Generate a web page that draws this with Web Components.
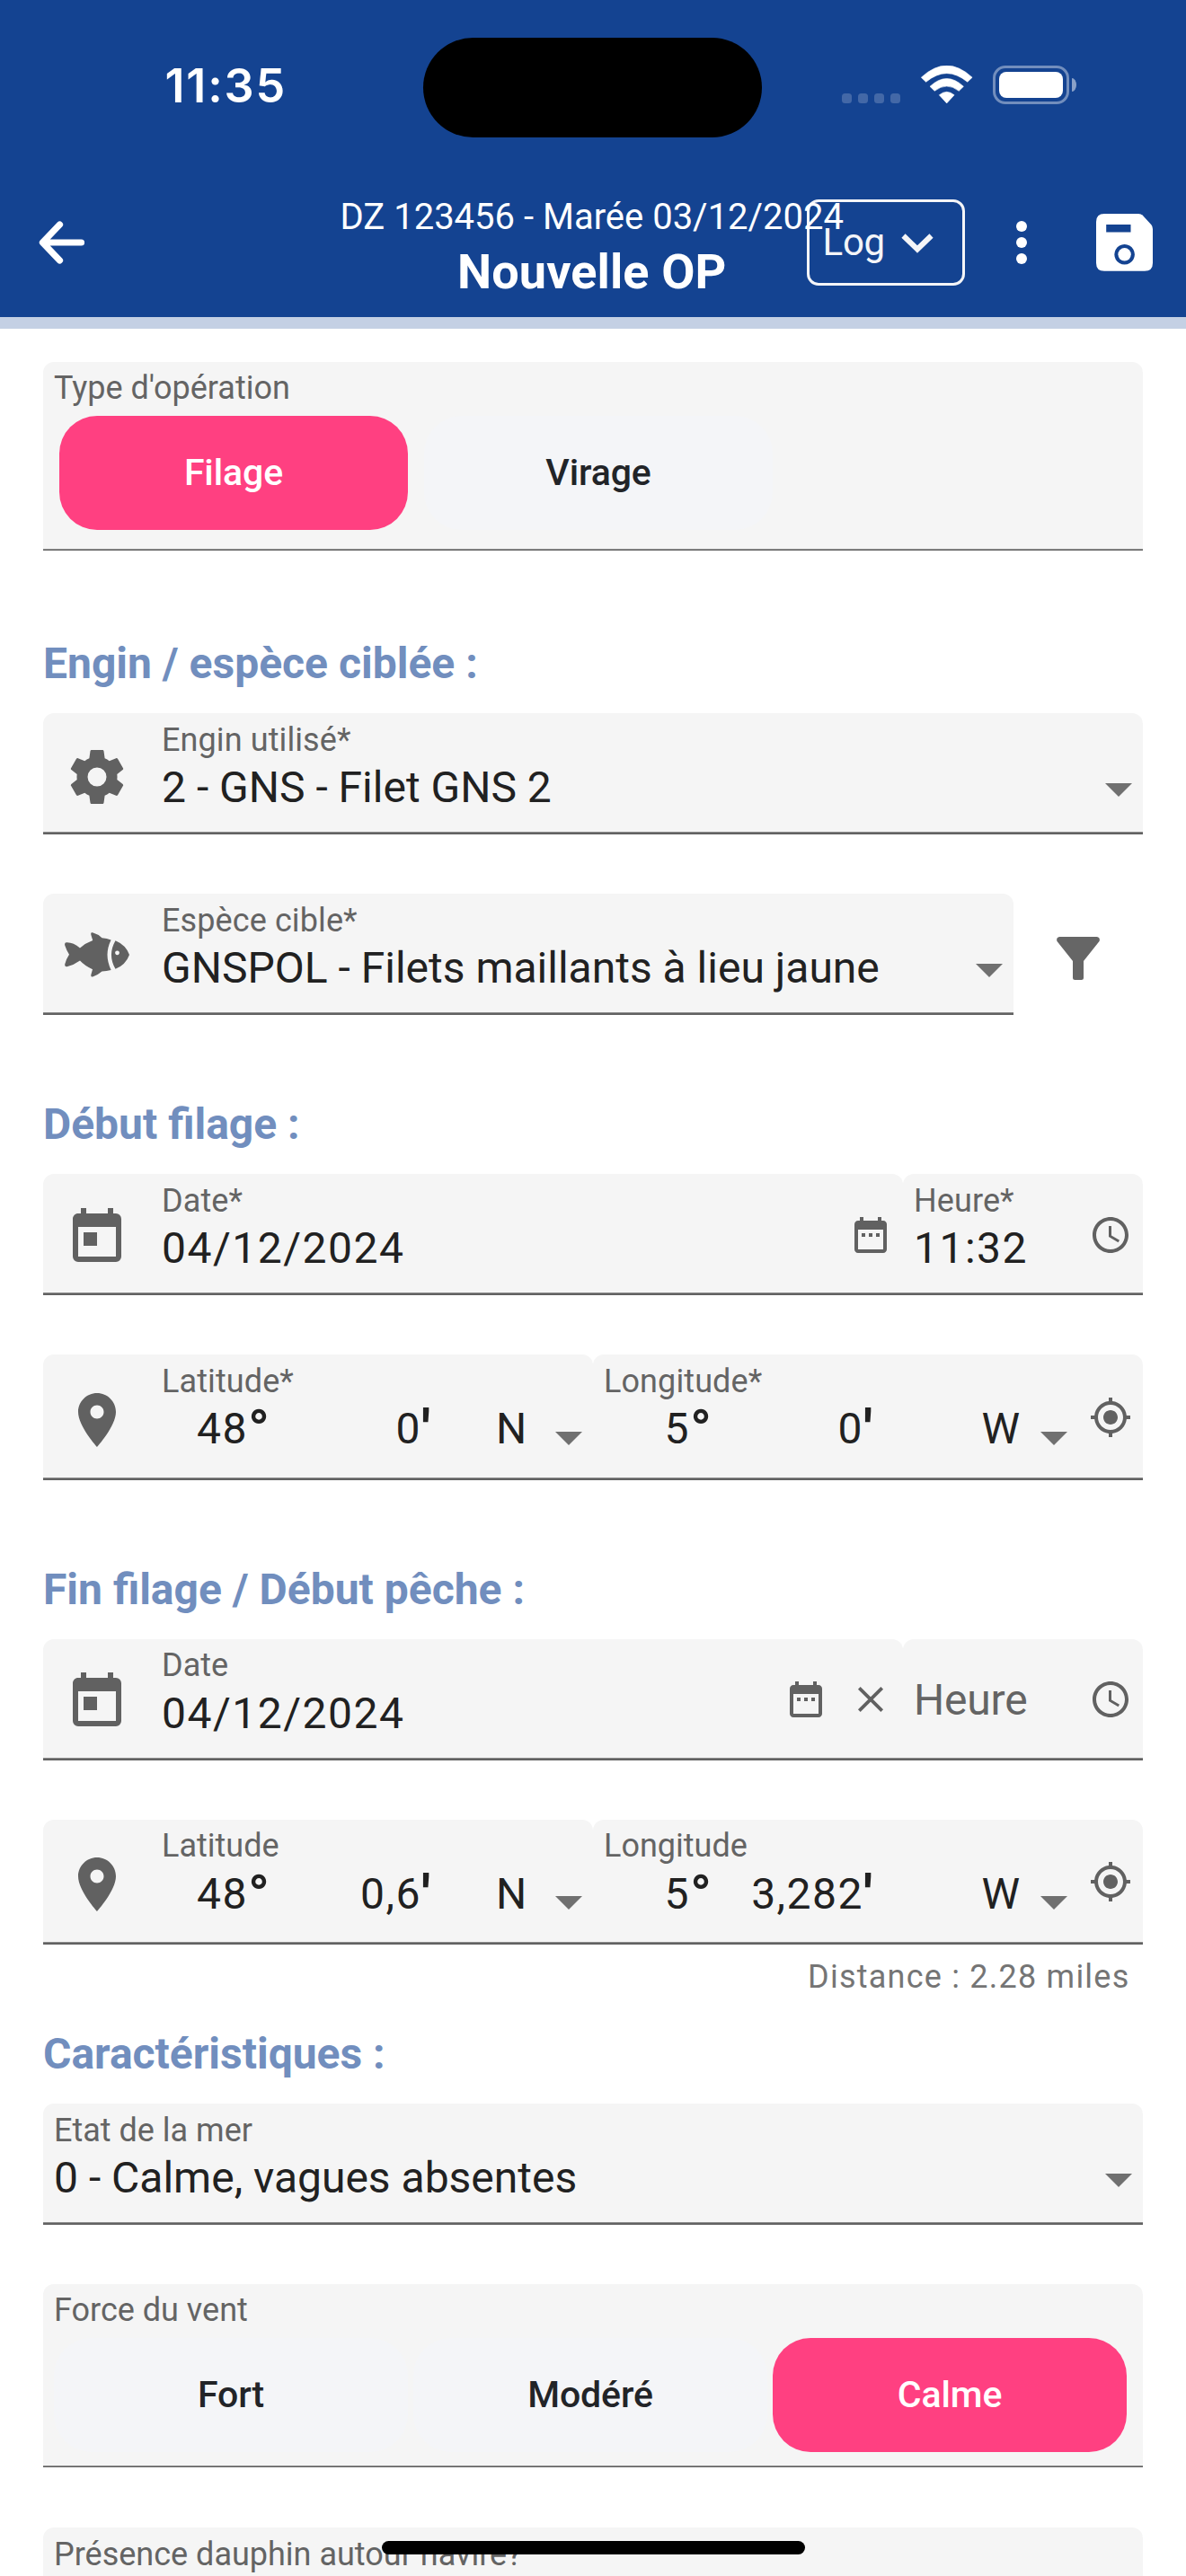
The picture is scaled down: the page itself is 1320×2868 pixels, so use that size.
<!DOCTYPE html>
<html lang="fr">
<head>
<meta charset="utf-8">
<title>Nouvelle OP</title>
<style>
  html, body { margin: 0; padding: 0; }
  body { width: 1320px; height: 2868px; overflow: hidden; background: #fff; font-family: Roboto, "Liberation Sans", sans-serif; color: #212121; }
</style>
</head>
<body>
<op-page></op-page>
<script>
const ICONS = {
  back: ['0 0 60 48', '<path d="M27.5 4 8.4 24 27.5 44M9 24H51.5" fill="none" stroke="currentColor" stroke-width="7.2" stroke-linecap="round" stroke-linejoin="round"/>'],
  chevron: ['0 0 36 24', '<path d="M2.5 3.5 18 18.5 33.5 3.5" fill="none" stroke="currentColor" stroke-width="6"/>'],
  more: ['0 0 12 48', '<circle cx="6" cy="6" r="6"/><circle cx="6" cy="24" r="6"/><circle cx="6" cy="42" r="6"/>'],
  save: ['0 0 64 64', '<path fill-rule="evenodd" d="M9 0H47Q50 0 52 2L61.4 12.3Q63 14.2 63 17V54.7Q63 63.7 54 63.7H9Q0 63.7 0 54.7V9Q0 0 9 0ZM11.2 12V20.6H38.5V12ZM31.6 34a11.3 11.3 0 1 0 .01 0Z"/><circle cx="31.6" cy="45.3" r="7.2"/>'],
  wifi: ['0 0 58 43', '<path stroke="currentColor" stroke-width=".6" stroke-linejoin="round" d="M.3 13.2Q28.7-13 57.1 13.2L51.8 18.3Q28.7-1 5.6 18.3ZM10 23.3Q28.7 5.7 47.4 23.3L42.2 28.3Q28.7 17.7 15.2 28.3ZM20.3 32.8Q28.7 25.8 37.1 32.8L28.7 41.9Z"/>'],
  cog: ['0 0 24 24', '<path d="M12,15.5A3.5,3.5 0 0,1 8.5,12A3.5,3.5 0 0,1 12,8.5A3.5,3.5 0 0,1 15.5,12A3.5,3.5 0 0,1 12,15.5M19.43,12.97C19.47,12.65 19.5,12.33 19.5,12C19.5,11.67 19.47,11.34 19.43,11L21.54,9.37C21.73,9.22 21.78,8.95 21.66,8.73L19.66,5.27C19.54,5.05 19.27,4.96 19.05,5.05L16.56,6.05C16.04,5.66 15.5,5.32 14.87,5.07L14.5,2.42C14.46,2.18 14.25,2 14,2H10C9.75,2 9.54,2.18 9.5,2.42L9.13,5.07C8.5,5.32 7.96,5.66 7.44,6.05L4.95,5.05C4.73,4.96 4.46,5.05 4.34,5.27L2.34,8.73C2.21,8.95 2.27,9.22 2.46,9.37L4.57,11C4.53,11.34 4.5,11.67 4.5,12C4.5,12.33 4.53,12.65 4.57,12.97L2.46,14.63C2.27,14.78 2.21,15.05 2.34,15.27L4.34,18.73C4.46,18.95 4.73,19.03 4.95,18.95L7.44,17.94C7.96,18.34 8.5,18.68 9.13,18.93L9.5,21.58C9.54,21.82 9.75,22 10,22H14C14.25,22 14.46,21.82 14.5,21.58L14.87,18.93C15.5,18.67 16.04,18.34 16.56,17.94L19.05,18.95C19.27,19.03 19.54,18.95 19.66,18.73L21.66,15.27C21.78,15.05 21.73,14.78 21.54,14.63L19.43,12.97Z"/>'],
  fish: ['0 -8 72 72', '<path d="M31 .3Q28.6-.3 29.4 3L31.2 9Q23 12 17 17.4Q9.5 11 2 11.3Q-.5 11.5.2 14.5Q2 20 5 24.8Q1.5 30 .2 35.5Q-.2 38.6 2.5 38.3Q10 36.5 17 31.5Q22 37 31 41.2L29.4 47Q28.7 50 31.2 49.5Q36 48 41.5 43.4Q46.5 43.2 51.6 42Q43.4 25 51.6 8.4Q47 6.8 41.5 6.2Q37 2 31 .3Z"/><path fill-rule="evenodd" d="M56.5 9.2Q68 14 72 24.9Q68 36 56.5 40.8Q47.4 25 56.5 9.2ZM58.5 20.4a2.4 2.4 0 1 0 .01 0Z"/>'],
  today: ['0 0 24 24', '<path d="M19 3h-1V1h-2v2H8V1H6v2H5c-1.11 0-2 .89-2 2v14a2 2 0 0 0 2 2h14a2 2 0 0 0 2-2V5a2 2 0 0 0-2-2m0 16H5V8h14zM7 10h5v5H7"/>'],
  dates: ['0 0 24 24', '<path d="M9 11H7v2h2v-2zm4 0h-2v2h2v-2zm4 0h-2v2h2v-2zm2-7h-1V2h-2v2H8V2H6v2H5c-1.11 0-1.99.9-1.99 2L3 20c0 1.1.89 2 2 2h14c1.1 0 2-.9 2-2V6c0-1.1-.9-2-2-2zm0 16H5V9h14v11z"/>'],
  clock: ['0 0 24 24', '<path d="M11.99 2C6.47 2 2 6.48 2 12s4.47 10 9.99 10C17.52 22 22 17.52 22 12S17.52 2 11.99 2zM12 20c-4.42 0-8-3.58-8-8s3.58-8 8-8 8 3.58 8 8-3.58 8-8 8zm.5-13H11v6l5.25 3.15.75-1.23-4.5-2.67z"/>'],
  close: ['0 0 48 48', '<path d="M11.3 11.3 36.7 36.7M36.7 11.3 11.3 36.7" stroke="currentColor" stroke-width="3.8"/>'],
  pin: ['0 0 24 24', '<path d="M12 2C8.13 2 5 5.13 5 9c0 5.25 7 13 7 13s7-7.75 7-13c0-3.87-3.13-7-7-7zm0 9.5c-1.38 0-2.5-1.12-2.5-2.5s1.12-2.5 2.5-2.5 2.5 1.12 2.5 2.5-1.12 2.5-2.5 2.5z"/>'],
  gps: ['0 0 24 24', '<path d="M12 8c-2.21 0-4 1.79-4 4s1.79 4 4 4 4-1.79 4-4-1.79-4-4-4zm8.94 3c-.46-4.17-3.77-7.48-7.94-7.94V1h-2v2.06C6.83 3.52 3.52 6.83 3.06 11H1v2h2.06c.46 4.17 3.77 7.48 7.94 7.94V23h2v-2.06c4.17-.46 7.48-3.77 7.94-7.94H23v-2h-2.06zM12 19c-3.87 0-7-3.13-7-7s3.13-7 7-7 7 3.13 7 7-3.13 7-7 7z"/>'],
  filter: ['0 0 48 48', '<path d="M3 0H45Q49 1 47.5 5L30 27V45.5Q30 48 27.5 48H20.5Q18 48 18 45.5V27L.5 5Q-1 1 3 0Z"/>'],
  arrow: ['0 0 30 15', '<path d="M0 0H30L15 15Z"/>']
};

function component(name, render) {
  customElements.define(name, class extends HTMLElement {
    connectedCallback() {
      if (this.shadowRoot) return;
      const t = document.createElement('template');
      t.innerHTML = render(this);
      this.attachShadow({ mode: 'open' }).append(t.content.cloneNode(true));
    }
  });
}

component('ui-icon', el => {
  const [box, body] = ICONS[el.getAttribute('name')];
  const [, , vw, vh] = box.split(' ').map(Number);
  const w = +(el.getAttribute('w') || vw);
  return `<style>:host{display:block;flex:none;line-height:0}svg{display:block;fill:currentColor}</style>
    <svg width="${w}" height="${w * vh / vw}" viewBox="${box}">${body}</svg>`;
});

component('status-bar', () => `
  <style>
    :host { display: block; position: relative; height: 180px; color: #fff; }
    .row { display: flex; align-items: flex-start; padding: 0 122px 0 183.5px; }
    .time { font: 600 52px/60px Inter, sans-serif; letter-spacing: 1.84px; margin-top: 66px; }
    .island { position: absolute; left: 471px; top: 41.5px; width: 377px; height: 111px; border-radius: 55.5px; background: #000; }
    .signal { display: flex; gap: 7px; margin: 104px 22.6px 0 auto; }
    .signal i { width: 11px; height: 11px; border-radius: 3.5px; background: rgba(255,255,255,.2); }
    ui-icon { margin: 73px 22px 0 0; }
    .battery { box-sizing: border-box; width: 85px; height: 43px; margin-top: 73px; padding: 4px; border: 3px solid rgba(255,255,255,.4); border-radius: 14px; }
    .battery i { display: block; height: 100%; border-radius: 8px; background: #fff; }
    .nub { width: 5px; height: 15px; margin: 87px 0 0 3px; border-radius: 0 5px 5px 0 / 0 7.5px 7.5px 0; background: rgba(255,255,255,.5); }
  </style>
  <div class="row">
    <span class="time">11:35</span>
    <div class="signal"><i></i><i></i><i></i><i></i></div>
    <ui-icon name="wifi"></ui-icon>
    <div class="battery"><i></i></div><div class="nub"></div>
  </div>
  <div class="island"></div>`);

component('app-toolbar', () => `
  <style>
    :host { display: block; position: relative; height: 173px; color: #fff; }
    .row { box-sizing: border-box; height: 173px; padding: 7px 36.5px 0 39px; display: flex; align-items: center; }
    .title { position: absolute; inset: 33px 2.5px auto 0; text-align: center; white-space: nowrap; pointer-events: none; }
    .sub { font-size: 40px; line-height: 58px; }
    .main { font-size: 54px; line-height: 64px; font-weight: 700; letter-spacing: .1px; }
    .log { box-sizing: border-box; width: 176.5px; height: 96.5px; margin: 0 57px 0 auto; padding-left: 15px; border: 3px solid #f4f5f8; border-radius: 13px; display: flex; align-items: center; color: #f4f5f8; font-size: 42px; line-height: 56px; letter-spacing: -.3px; }
    .log ui-icon { margin: 2px 0 0 18px; }
    .more { margin-right: 76.4px; }
  </style>
  <div class="row">
    <ui-icon name="back"></ui-icon>
    <div class="log"><span>Log</span><ui-icon name="chevron"></ui-icon></div>
    <ui-icon class="more" name="more"></ui-icon>
    <ui-icon name="save"></ui-icon>
  </div>
  <div class="title"><div class="sub">DZ 123456 - Marée 03/12/2024</div><div class="main">Nouvelle OP</div></div>`);

component('section-title', () => `
  <style>
    :host { display: block; box-sizing: border-box; height: 177px; }
    .gap { height: 93.6px; overflow: visible; }
    h2 { margin: 0; font-size: 48px; line-height: 56px; font-weight: 700; color: #718ebe; }
    ::slotted([slot=hint]) { display: block; padding: 14.7px 14.5px 0 0; text-align: right; font-size: 36px; line-height: 42px; letter-spacing: 1.23px; color: #757575; }
  </style>
  <div class="gap"><slot name="hint"></slot></div>
  <h2><slot></slot></h2>`);

/* A line of panels that share one underline. */
component('field-row', () => `
  <style>
    :host { display: flex; flex-direction: column; box-sizing: border-box; height: var(--h, 135px); }
    .panels { flex: 1; min-height: 0; display: flex; }
    .rule { flex: none; height: 3px; background: linear-gradient(#8b8b8b 1px, #626262 1px); }
  </style>
  <div class="panels"><slot></slot></div><div class="rule"></div>`);

component('field-panel', el => `
  <style>
    :host { display: flex; flex: 1; min-width: 0; align-items: flex-start; box-sizing: border-box; padding: 0 12px; background: #f5f5f5; border-radius: 12px 12px 0 0; }
    .lead { margin: calc(35px + var(--row, 0px) + var(--dy, 0px)) 36px 0 12px; color: #616161; }
    .body { flex: 1; min-width: 0; }
    .label { height: 42px; margin-top: calc(8.6px + var(--dy, 0px)); font-size: 36px; line-height: 42px; color: #646464; white-space: nowrap; }
    .required { letter-spacing: .1px; }
    .value { margin-top: calc(4.2px - var(--dy, 0px)); height: 56px; font-size: 48px; line-height: 56px; color: #212121; white-space: nowrap; }
    :host([digits]) .value { letter-spacing: 1.5px; }
    :host([empty]) .value { margin-top: 39.6px; color: #646464; letter-spacing: -.2px; }
    .tail { flex: none; display: flex; gap: 24px; margin-top: calc(43.5px + var(--row, 0px) + var(--dy, 0px)); color: #616161; }
    .tail.caret { margin-top: 78px; color: #707070; }
  </style>
  ${el.hasAttribute('icon') ? `<ui-icon class="lead" name="${el.getAttribute('icon')}" w="72"></ui-icon>` : ''}
  <div class="body">${el.hasAttribute('label') ? `<div class="label${el.getAttribute('label').endsWith('*') ? ' required' : ''}">${el.getAttribute('label')}</div>` : ''}<div class="value"><slot></slot></div></div>
  ${el.hasAttribute('actions') ? `<div class="tail">${el.getAttribute('actions').split(' ').map(n => `<ui-icon name="${n}" w="48"></ui-icon>`).join('')}</div>` : ''}
  ${el.hasAttribute('select') ? '<div class="tail caret"><ui-icon name="arrow"></ui-icon></div>' : ''}`);

/* Degrees, minutes and hemisphere of one coordinate. */
component('geo-value', el => `
  <style>
    :host { display: flex; align-items: flex-start; height: 56px; }
    .n { text-align: right; letter-spacing: 1.5px; }
    .deg { width: 96px; } .min { width: 169px; }
    .u { width: 24px; font-size: 62px; line-height: 58px; font-weight: 700; }
    .hemi { margin-left: var(--hemi); }
    ui-icon { margin: calc(31.2px + var(--dy, 0px)) var(--end, 0px) 0 auto; color: #707070; }
  </style>
  <span class="n deg">${el.getAttribute('deg')}</span><span class="u">°</span>
  <span class="n min">${el.getAttribute('min')}</span><span class="u">'</span>
  <span class="hemi">${el.getAttribute('hemi')}</span><ui-icon name="arrow"></ui-icon>`);

component('choice-field', el => `
  <style>
    :host { display: flex; flex-direction: column; box-sizing: border-box; height: var(--h); background: #f5f5f5; border-radius: 12px 12px 0 0; }
    .label { margin: 8px 12px 0; font-size: 36px; line-height: 42px; color: #646464; }
    .opts { flex: 1; display: flex; align-items: flex-start; gap: var(--gap); padding: 10px 0 0 var(--pad); }
    .rule { height: 2px; background: linear-gradient(#8b8b8b 1px, #646464 1px); }
  </style>
  <div class="label">${el.getAttribute('label')}</div>
  <div class="opts"><slot></slot></div><div class="rule"></div>`);

component('choice-button', () => `
  <style>
    :host { display: flex; align-items: center; justify-content: center; box-sizing: border-box; flex: none; width: var(--w); height: 127px; padding-bottom: 2px; border-radius: 42px; background: #f4f5f8; color: #222428; font-size: 41px; font-weight: 500; letter-spacing: -.1px; }
    :host([selected]) { background: #ff4081; color: #fff; }
  </style><slot></slot>`);

component('op-page', () => `
  <style>
    :host { display: block; position: relative; width: 1320px; height: 2868px; overflow: hidden; }
    header { height: 353px; background: #144391; border-bottom: 13px solid #c4d0e4; }
    main { padding: 37px 48px 0; }
    field-row + field-row, field-row + choice-field, .with-filter { margin-top: 66px; }
    .first { --h: 210px; --w: 388px; --gap: 18px; --pad: 18px; margin-bottom: 4px; }
    .wind { --h: 204px; --w: 394px; --gap: 6px; --pad: 12px; }
    .with-filter { display: flex; align-items: flex-start; }
    .with-filter field-row { width: 1080px; }
    .with-filter ui-icon { margin: 48px 0 0 48px; color: #666; }
    .geo { --h: 140px; --row: 2px; }
    .short { --h: 139px; }
    .opt { --dy: -1px; }
    .time { flex: 0 0 267px; }
    .lat { flex: 0 0 612px; --hemi: 59px; --end: .5px; }
    .lon { --hemi: 107.5px; --end: 24.5px; }
    .next { margin-top: 67px; }
    .home { position: absolute; left: 425px; top: 2829px; width: 471px; height: 15px; border-radius: 7.5px; background: #000; }
  </style>
  <header><status-bar></status-bar><app-toolbar></app-toolbar></header>
  <main>
    <choice-field class="first" label="Type d'opération"><choice-button selected>Filage</choice-button><choice-button>Virage</choice-button></choice-field>

    <section-title>Engin / espèce ciblée :</section-title>
    <field-row><field-panel icon="cog" label="Engin utilisé*" select>2 - GNS - Filet GNS 2</field-panel></field-row>
    <div class="with-filter">
      <field-row><field-panel icon="fish" label="Espèce cible*" select>GNSPOL - Filets maillants à lieu jaune</field-panel></field-row>
      <ui-icon name="filter"></ui-icon>
    </div>

    <section-title>Début filage :</section-title>
    <field-row>
      <field-panel icon="today" label="Date*" actions="dates" digits>04/12/2024</field-panel>
      <field-panel class="time" label="Heure*" actions="clock" digits>11:32</field-panel>
    </field-row>
    <field-row class="geo">
      <field-panel class="lat" icon="pin" label="Latitude*"><geo-value deg="48" min="0" hemi="N"></geo-value></field-panel>
      <field-panel class="lon" label="Longitude*" actions="gps"><geo-value deg="5" min="0" hemi="W"></geo-value></field-panel>
    </field-row>

    <section-title>Fin filage / Début pêche :</section-title>
    <field-row class="opt">
      <field-panel icon="today" label="Date" actions="dates close" digits>04/12/2024</field-panel>
      <field-panel class="time" actions="clock" empty>Heure</field-panel>
    </field-row>
    <field-row class="geo short opt">
      <field-panel class="lat" icon="pin" label="Latitude"><geo-value deg="48" min="0,6" hemi="N"></geo-value></field-panel>
      <field-panel class="lon" label="Longitude" actions="gps"><geo-value deg="5" min="3,282" hemi="W"></geo-value></field-panel>
    </field-row>

    <section-title><span slot="hint">Distance : 2.28 miles</span>Caractéristiques :</section-title>
    <field-row><field-panel label="Etat de la mer" select>0 - Calme, vagues absentes</field-panel></field-row>
    <choice-field class="wind" label="Force du vent"><choice-button>Fort</choice-button><choice-button>Modéré</choice-button><choice-button selected>Calme</choice-button></choice-field>
    <field-row class="next"><field-panel label="Présence dauphin autour navire?"></field-panel></field-row>
  </main>
  <div class="home"></div>`);
</script>
</body>
</html>
